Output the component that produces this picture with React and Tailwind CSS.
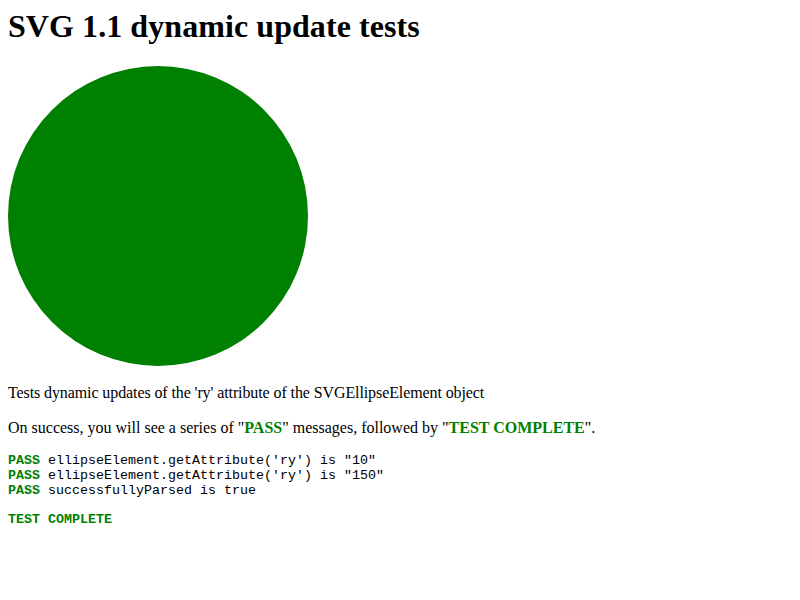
export default function App() {
  return (
    <div className="m-2 text-black bg-white" style={{ fontFamily: '"Liberation Serif", serif' }}>
      <h1 className="text-[32px] font-bold leading-[37px] mt-0 mb-[21px] tracking-[0.07px]">SVG 1.1 dynamic update tests</h1>

      <svg className="block" width="300" height="300" viewBox="0 0 300 300">
        <ellipse cx="150" cy="150" rx="150" ry="150" fill="#008000" />
      </svg>

      <p className="text-base leading-[19px] mt-[17px] mb-4 tracking-[-0.1px]">
        Tests dynamic updates of the 'ry' attribute of the SVGEllipseElement object
      </p>
      <p className="text-base leading-[19px] my-4">
        On success, you will see a series of "<span className="font-bold text-[#008000]">PASS</span>" messages, followed by "
        <span className="font-bold text-[#008000]">TEST COMPLETE</span>".
      </p>

      <div className="mt-4 text-[13.33px] leading-[15px] whitespace-pre" style={{ fontFamily: '"Liberation Mono", monospace' }}>
        <div><span className="font-bold text-[#008000]">PASS</span> ellipseElement.getAttribute('ry') is "10"</div>
        <div><span className="font-bold text-[#008000]">PASS</span> ellipseElement.getAttribute('ry') is "150"</div>
        <div><span className="font-bold text-[#008000]">PASS</span> successfullyParsed is true</div>
        <div className="h-[14px]"></div>
        <div><span className="font-bold text-[#008000]">TEST COMPLETE</span></div>
      </div>
    </div>
  );
}
